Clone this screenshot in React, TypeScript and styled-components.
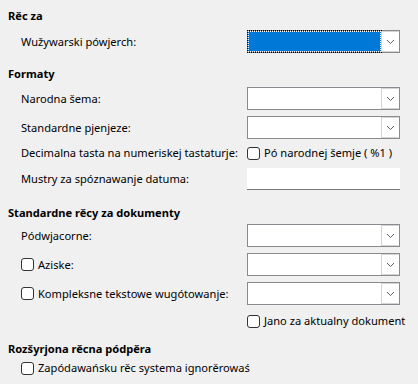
import React from 'react';
import styled, { createGlobalStyle } from 'styled-components';

const GlobalStyle = createGlobalStyle`
  html, body {
    margin: 0;
    padding: 0;
    background: #f0f0f0;
  }
  body {
    font-family: 'Noto Sans', 'Open Sans', sans-serif;
    font-size: 11.1px;
    color: #000;
  }
`;

const Page = styled.div`
  display: flex;
  flex-direction: column;
  width: 418px;
  height: 384px;
  padding-top: 8px;
  box-sizing: border-box;
  overflow: hidden;
`;

const Heading = styled.div<{ $top?: number }>`
  margin-top: ${(p) => p.$top ?? 0}px;
  padding-left: 8px;
  height: 16px;
  line-height: 16px;
  font-weight: 700;
`;

const Row = styled.div<{ $top?: number; $height?: number }>`
  display: grid;
  grid-template-columns: 226px 153px;
  align-items: center;
  margin-top: ${(p) => p.$top ?? 0}px;
  padding-left: 21px;
  height: ${(p) => p.$height ?? 23}px;
`;

const Label = styled.span`
  white-space: nowrap;
  line-height: 16px;
`;

const CheckLabel = styled.label`
  display: flex;
  align-items: center;
  gap: 4px;
  white-space: nowrap;
  line-height: 16px;
`;

const Box = styled.span`
  display: inline-block;
  width: 11px;
  height: 11px;
  border: 1px solid #333;
  border-radius: 3px;
  background: #fff;
  flex: none;
`;

const ComboFrame = styled.div`
  display: flex;
  height: 23px;
  box-sizing: border-box;
  border: 1px solid #878a8e;
  background: #fff;
`;

const ComboValue = styled.div<{ $focused?: boolean }>`
  flex: 1;
  background: ${(p) => (p.$focused ? '#0078d7' : '#fff')};
  outline: ${(p) => (p.$focused ? '1px dotted #000' : 'none')};
  border: ${(p) => (p.$focused ? '1px dotted #fff' : '1px solid transparent')};
`;

const ComboButton = styled.div`
  width: 16px;
  display: flex;
  align-items: center;
  justify-content: center;
  border: 1px solid #d4d4d4;
  border-right-color: #fff;
  background: #fff;
`;

const TextField = styled.div`
  height: 21px;
  background: #fff;
  border-bottom: 1px solid #7a7a7a;
`;

const Chevron = () => (
  <svg width="9" height="6" viewBox="0 0 9 6">
    <polyline points="1,1 4.5,4.5 8,1" fill="none" stroke="#606060" strokeWidth="1" />
  </svg>
);

const Combo = ({ focused }: { focused?: boolean }) => (
  <ComboFrame>
    <ComboValue $focused={focused} />
    <ComboButton>
      <Chevron />
    </ComboButton>
  </ComboFrame>
);

const Check = ({ text }: { text: string }) => (
  <CheckLabel>
    <Box />
    {text}
  </CheckLabel>
);

const App = (): React.ReactElement => (
  <>
    <GlobalStyle />
    <Page>
      <Heading>Rěc za</Heading>
      <Row $top={6}>
        <Label>Wužywarski pówjerch:</Label>
        <Combo focused />
      </Row>

      <Heading $top={13}>Formaty</Heading>
      <Row $top={5}>
        <Label>Narodna šema:</Label>
        <Combo />
      </Row>
      <Row $top={6}>
        <Label>Standardne pjenjeze:</Label>
        <Combo />
      </Row>
      <Row $top={4} $height={20}>
        <Label>Decimalna tasta na numeriskej tastaturje:</Label>
        <Check text="Pó narodnej šemje ( %1 )" />
      </Row>
      <Row $top={5} $height={22}>
        <Label>Mustry za spóznawanje datuma:</Label>
        <TextField />
      </Row>

      <Heading $top={15}>Standardne rěcy za dokumenty</Heading>
      <Row $top={3}>
        <Label>Pódwjacorne:</Label>
        <Combo />
      </Row>
      <Row $top={6}>
        <Check text="Aziske:" />
        <Combo />
      </Row>
      <Row $top={6}>
        <Check text="Kompleksne tekstowe wugótowanje:" />
        <Combo />
      </Row>
      <Row $top={7} $height={18}>
        <span />
        <Check text="Jano za aktualny dokument" />
      </Row>

      <Heading $top={11}>Rozšyrjona rěcna pódpěra</Heading>
      <Row $top={2} $height={18}>
        <Check text="Zapódawańsku rěc systema ignorěrowaś" />
      </Row>
    </Page>
  </>
);

export default App;
